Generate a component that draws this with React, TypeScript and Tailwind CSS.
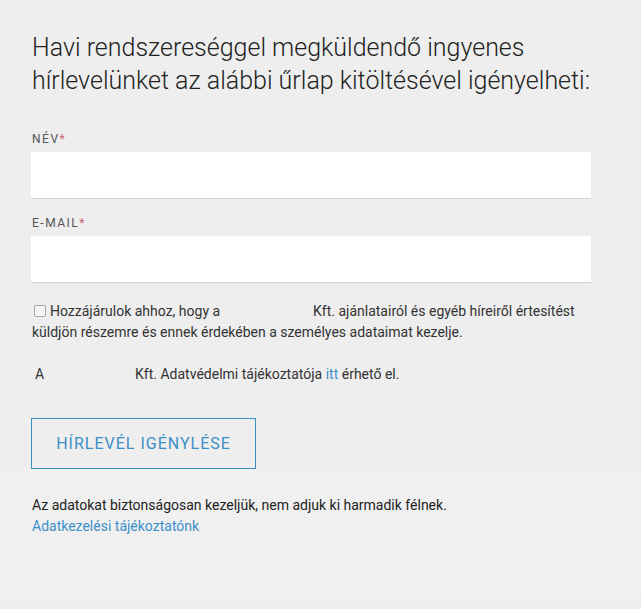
import React from "react";

export default function App() {
  return (
    <div className="min-h-[609px] w-full bg-[#eeeeee] font-['Roboto',sans-serif]">
      <div className="pl-[32px] pr-[40px] pt-[31px]">
        <h1 className="text-[25px] font-light leading-[33px] text-[#222]">
          Havi rendszereséggel megküldendő ingyenes
          <br />
          hírlevelünket az alábbi űrlap kitöltésével igényelheti:
        </h1>

        <div className="mt-[34px]">
          <label className="block text-[12px] tracking-[1.5px] text-[#555] leading-[16px]">
            NÉV<span className="text-[#c9636f]">*</span>
          </label>
          <div className="mt-[5px] h-[47px] w-[560px] -ml-px bg-white border-b border-[#d4d4d4]" />
        </div>

        <div className="mt-[16px]">
          <label className="block text-[12px] tracking-[1.5px] text-[#555] leading-[16px]">
            E-MAIL<span className="text-[#c9636f]">*</span>
          </label>
          <div className="mt-[5px] h-[47px] w-[560px] -ml-px bg-white border-b border-[#d4d4d4]" />
        </div>

        <div className="mt-[18px] text-[14px] leading-[21px] text-[#333] w-[560px]">
          <span className="inline-block align-[-1px] mr-[4px] ml-[2px] h-[12px] w-[12px] rounded-[2px] border border-[#a8a8a8] bg-[#f4f4f4]" />
          Hozzájárulok ahhoz, hogy a <span className="inline-block w-[86px]" /> Kft. ajánlatairól és egyéb híreiről értesítést küldjön részemre és ennek érdekében a személyes adataimat kezelje.
        </div>

        <div className="mt-[21px] text-[14px] leading-[21px] text-[#333] pl-[3px]">
          A <span className="inline-block w-[84px]" /> Kft. Adatvédelmi tájékoztatója{" "}
          <span className="text-[#3d8fca]">itt</span> érhető el.
        </div>

        <button className="mt-[33px] -ml-px flex h-[51px] w-[225px] items-center justify-center border border-[#3a8fbd] text-[16px] tracking-[1px] text-[#3a8fc6]">
          HÍRLEVÉL IGÉNYLÉSE
        </button>
      </div>

      <div className="bg-[#f0f0f0] pl-[32px] pt-[26px] pb-[60px] text-[14px] leading-[21px]">
        <div className="text-[#222]">Az adatokat biztonságosan kezeljük, nem adjuk ki harmadik félnek.</div>
        <div className="text-[#3d8fca]">Adatkezelési tájékoztatónk</div>
      </div>
    </div>
  );
}
